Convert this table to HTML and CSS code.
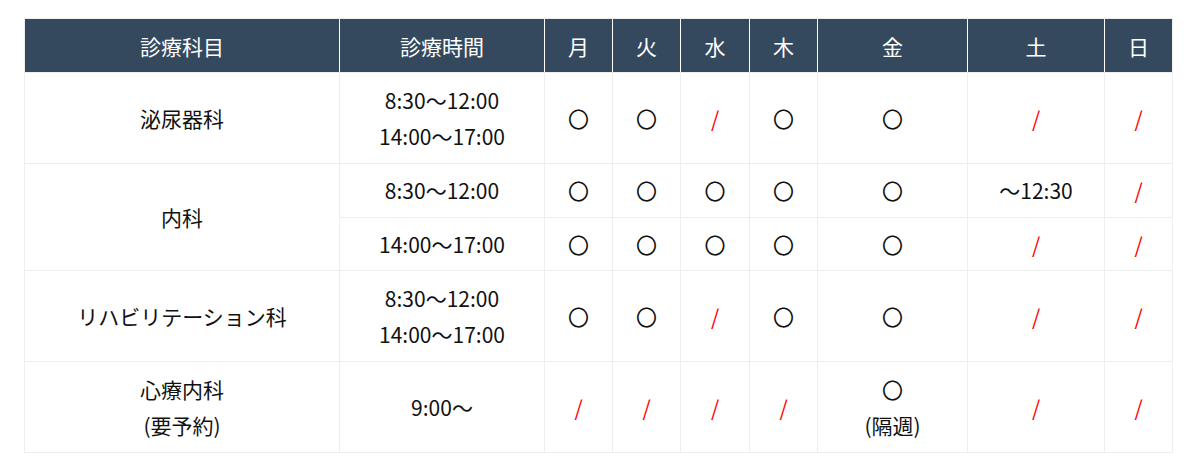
FILE: index.html
```html
<!DOCTYPE html>
<html lang="ja">
<head>
<meta charset="utf-8">
<title>診療時間</title>
<link rel="stylesheet" href="styles.css">
</head>
<body>
<div class="wrap">
<table class="schedule">
  <colgroup>
    <col class="c-dept"><col class="c-time">
    <col class="c-day"><col class="c-day"><col class="c-day3"><col class="c-day">
    <col class="c-fri"><col class="c-sat"><col class="c-day">
  </colgroup>
  <thead>
    <tr>
      <th>診療科目</th><th>診療時間</th>
      <th>月</th><th>火</th><th>水</th><th>木</th><th>金</th><th>土</th><th>日</th>
    </tr>
  </thead>
  <tbody>
    <tr class="tall">
      <td>泌尿器科</td>
      <td>8:30〜12:00<br>14:00〜17:00</td>
      <td>〇</td><td>〇</td><td class="no">/</td><td>〇</td><td>〇</td><td class="no">/</td><td class="no">/</td>
    </tr>
    <tr class="short">
      <td rowspan="2">内科</td>
      <td>8:30〜12:00</td>
      <td>〇</td><td>〇</td><td>〇</td><td>〇</td><td>〇</td><td>〜12:30</td><td class="no">/</td>
    </tr>
    <tr class="short">
      <td>14:00〜17:00</td>
      <td>〇</td><td>〇</td><td>〇</td><td>〇</td><td>〇</td><td class="no">/</td><td class="no">/</td>
    </tr>
    <tr class="tall">
      <td>リハビリテーション科</td>
      <td>8:30〜12:00<br>14:00〜17:00</td>
      <td>〇</td><td>〇</td><td class="no">/</td><td>〇</td><td>〇</td><td class="no">/</td><td class="no">/</td>
    </tr>
    <tr class="tall">
      <td>心療内科<br>(要予約)</td>
      <td>9:00〜</td>
      <td class="no">/</td><td class="no">/</td><td class="no">/</td><td class="no">/</td><td>〇<br>(隔週)</td><td class="no">/</td><td class="no">/</td>
    </tr>
  </tbody>
</table>
</div>
</body>
</html>
```

FILE: styles.css
```css
html, body {
  margin: 0;
  padding: 0;
  background: #fff;
}
.wrap {
  padding: 18px 20px 0 24px;
}
.schedule {
  width: 1148px;
  table-layout: fixed;
  border-collapse: collapse;
  font-family: "Noto Sans CJK JP", "Noto Sans", sans-serif;
  font-size: 21px;
  line-height: 36px;
  color: #111;
  text-align: center;
}
.c-dept { width: 315px; }
.c-time { width: 205px; }
.c-day { width: 68px; }
.c-day3 { width: 69px; }
.c-fri { width: 150px; }
.c-sat { width: 137px; }
.schedule th {
  background: #34495e;
  color: #fff;
  font-weight: normal;
  height: 53px;
  padding: 0;
  border: 1px solid #eee;
  border-right-color: #fff;
  border-left-color: #fff;
}
.schedule th:first-child { border-left-color: #eee; }
.schedule th:last-child { border-right-color: #eee; }
.schedule td {
  border: 1px solid #eee;
  padding: 0;
}
.tall td { height: 90px; }
.short td { height: 52.5px; }
.no { color: #f00; }
```
